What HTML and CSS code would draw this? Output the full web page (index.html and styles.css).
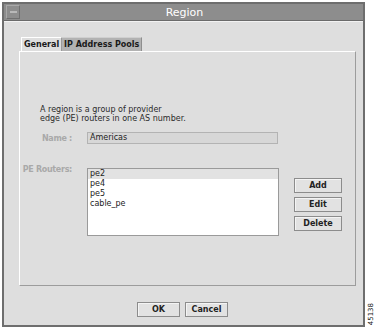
FILE: index.html
```html
<!DOCTYPE html>
<html lang="en">
<head>
    <meta charset="UTF-8">
    <meta name="viewport" content="width=device-width, initial-scale=1.0">
    <title>Region</title>
    <link rel="stylesheet" href="styles.css">
</head>
<body>
    <div class="page">
        <div class="window">
            <div class="titlebar">
                <span class="menu-btn"><span class="dash"></span></span>
                <span class="title">Region</span>
            </div>
            <div class="content">
                <div class="tabs">
                    <div class="tab active">General</div>
                    <div class="tab">IP Address Pools</div>
                </div>
                <div class="panel">
                    <p class="desc">A region is a group of provider<br>edge (PE) routers in one AS number.</p>

                    <div class="row name-row">
                        <label class="field-label">Name :</label>
                        <div class="text-field">Americas</div>
                    </div>

                    <div class="row routers-row">
                        <label class="field-label">PE Routers:</label>
                        <ul class="list">
                            <li class="selected">pe2</li>
                            <li>pe4</li>
                            <li>pe5</li>
                            <li>cable_pe</li>
                        </ul>
                        <div class="side-buttons">
                            <button class="btn">Add</button>
                            <button class="btn">Edit</button>
                            <button class="btn">Delete</button>
                        </div>
                    </div>
                </div>
                <div class="footer">
                    <button class="btn wide">OK</button>
                    <button class="btn wide">Cancel</button>
                </div>
            </div>
        </div>
        <div class="figure-id">45138</div>
    </div>
</body>
</html>
```

FILE: styles.css
```css
body {
    margin: 0;
    background: #fff;
    font-family: 'DejaVu Sans', sans-serif;
    font-size: 8px;
    color: #222;
}
.page {
    display: flex;
    padding: 2px 0 0 2px;
}
.window {
    width: 359px;
    height: 321px;
    border: 2px solid #6e6e6e;
    background: #dedede;
    display: flex;
    flex-direction: column;
}
.titlebar {
    height: 16px;
    background: #8d8d8d;
    border-bottom: 1px solid #6a6a6a;
    display: flex;
    align-items: center;
}
.menu-btn {
    width: 12px;
    height: 12px;
    margin-left: 2px;
    border: 1px solid #a8a8a8;
    border-right-color: #707070;
    border-bottom-color: #707070;
    display: flex;
    align-items: center;
    justify-content: center;
}
.dash {
    width: 7px;
    height: 2px;
    background: #b8b8b8;
}
.title {
    flex: 1;
    text-align: center;
    color: #fff;
    font-size: 11px;
    margin-right: 14px;
}
.content {
    flex: 1;
    display: flex;
    flex-direction: column;
    padding: 15px 7px 0 15px;
    border-top: 1px solid #f2f2f2;
}
.tabs {
    display: flex;
    padding-left: 2px;
}
.tab {
    height: 13px;
    line-height: 13px;
    padding: 0 2px;
    font-weight: bold;
    background: #b2b2b2;
    border-top: 1px solid #cfcfcf;
    border-right: 1px solid #8e8e8e;
    color: #1a1a1a;
}
.tab.active {
    background: #dedede;
    border-top: 1px solid #fff;
    border-left: 1px solid #fff;
    border-right: 1px solid #9a9a9a;
    width: 35px;
}
.panel {
    height: 233px;
    border: 1px solid #fff;
    border-right-color: #9c9c9c;
    border-bottom-color: #9c9c9c;
    padding: 0 0 0 4px;
}
.desc {
    margin: 53px 0 0 16px;
    line-height: 9px;
    color: #2a2a2a;
}
.row {
    display: flex;
    gap: 15px;
}
.field-label {
    width: 48px;
    display: flex;
    justify-content: flex-end;
    font-weight: bold;
    color: #a9a9a9;
    flex-shrink: 0;
    white-space: nowrap;
    letter-spacing: -0.3px;
}
.name-row {
    margin-top: 9px;
    align-items: center;
}
.text-field {
    width: 187px;
    height: 10px;
    line-height: 10px;
    padding-left: 2px;
    background: #d7d7d7;
    border: 1px solid #b3b3b3;
}
.routers-row {
    margin-top: 24px;
}
.routers-row .field-label {
    margin-top: -3px;
    height: 10px;
}
.list {
    list-style: none;
    margin: 0;
    padding: 0;
    width: 190px;
    height: 66px;
    background: #fff;
    border: 1px solid #9a9a9a;
}
.list li {
    height: 10px;
    line-height: 10px;
    padding-left: 2px;
}
.list li.selected {
    background: #e2e2e2;
}
.side-buttons {
    display: flex;
    flex-direction: column;
    gap: 4px;
    margin-top: 10px;
}
.btn {
    font-family: 'DejaVu Sans', sans-serif;
    font-size: 8px;
    font-weight: bold;
    color: #222;
    width: 48px;
    height: 15px;
    padding: 0;
    background: #e2e2e2;
    border: 1px solid #8c8c8c;
    box-shadow: inset 1px 1px 0 #f4f4f4;
}
.footer {
    display: flex;
    justify-content: center;
    gap: 5px;
    margin-top: 16px;
    margin-right: 10px;
}
.btn.wide {
    width: 43px;
}
.figure-id {
    writing-mode: vertical-rl;
    transform: rotate(180deg);
    font-size: 7px;
    align-self: flex-end;
    margin-left: 2px;
    margin-bottom: 2px;
}
```
